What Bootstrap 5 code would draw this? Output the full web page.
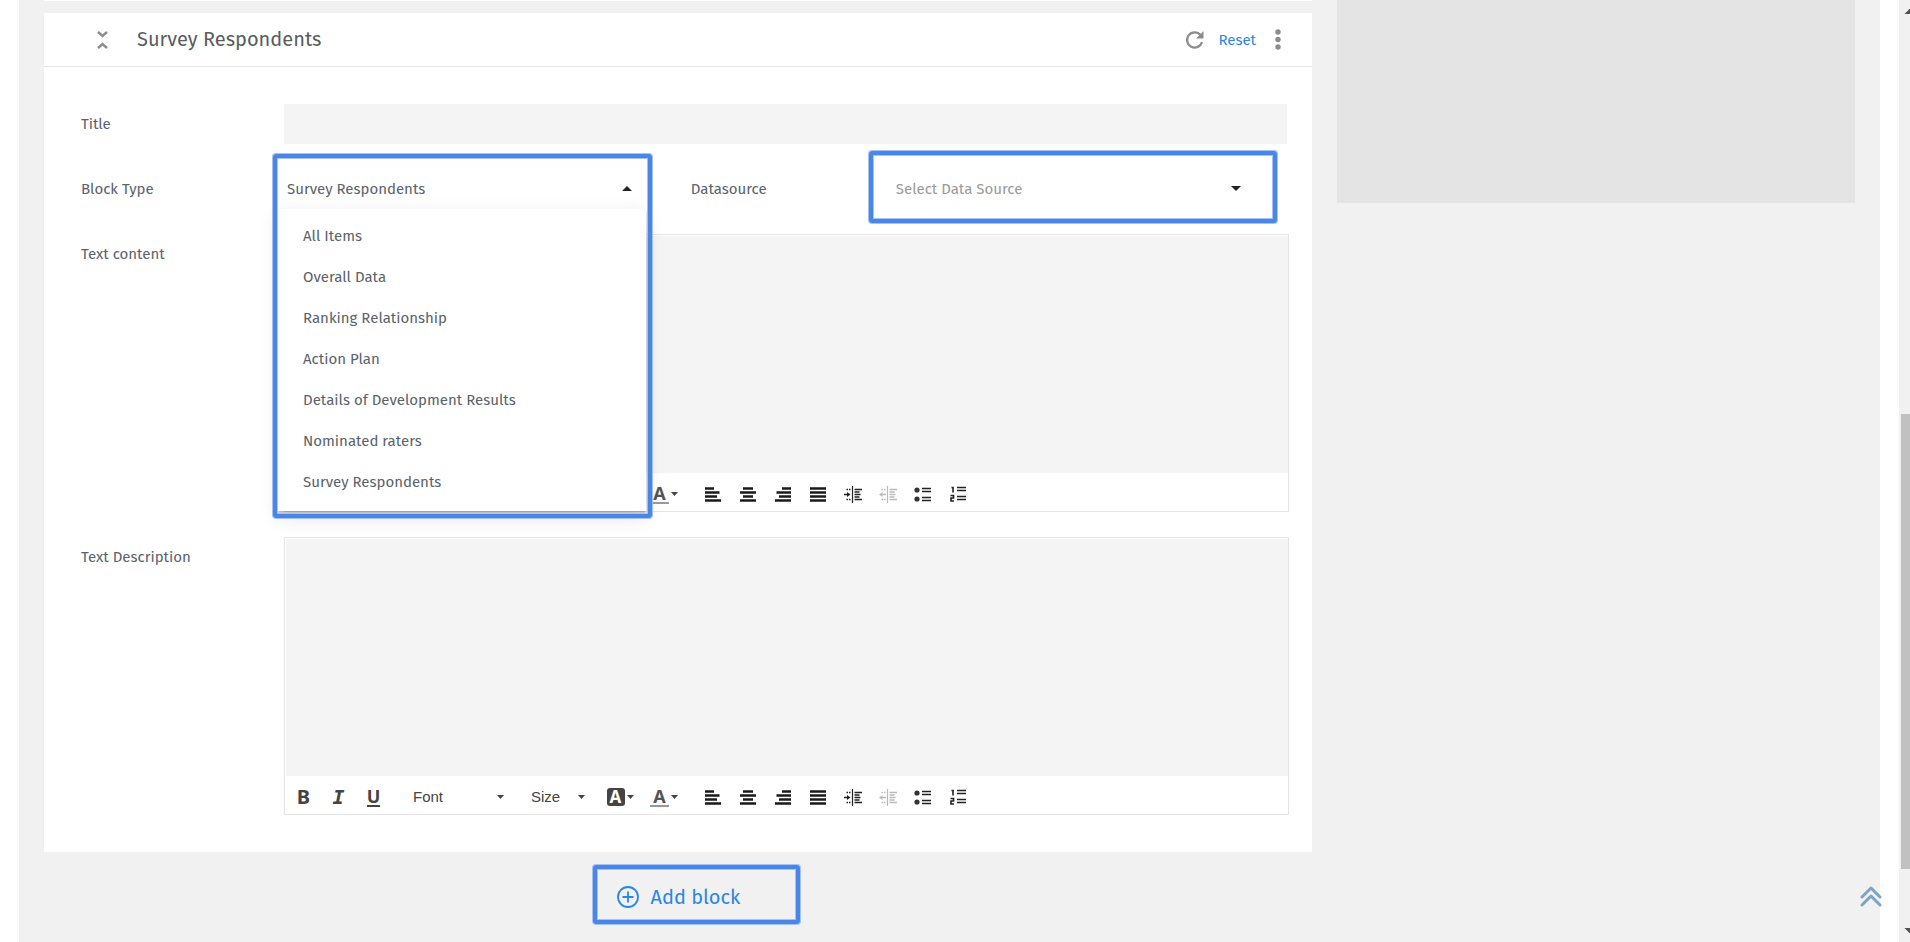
<!DOCTYPE html>
<html lang="en">
<head>
<meta charset="utf-8">
<meta name="viewport" content="width=device-width, initial-scale=1">
<title>Report blocks</title>
<link href="https://cdn.jsdelivr.net/npm/bootstrap@5.3.0/dist/css/bootstrap.min.css" rel="stylesheet">
<style>
  body { font-family: "Fira Sans", "Noto Sans", sans-serif; font-size: 15px; line-height: 20px; color: #5a626b; background: #fff; }
  .page-area { background: #f1f1f1; margin: 0 30px 0 19px; padding: 0 25px; gap: 25px; }
  .col-blocks { flex: 1268 1 0; min-width: 0; }
  .col-preview { flex: 518 1 0; height: 203px; background: #e4e4e4; }
  .block-prev { height: 1px; margin-bottom: 12px; background: #fff; }
  .block-head { height: 54px; border-bottom: 1px solid #e6e6e6; padding: 0 26px 0 43px; }
  .block-head h2 { font-size: 20px; line-height: 26px; font-weight: 400; color: #5a5c60; margin: 0 0 2px 8px; }
  .block-body { padding: 37px 23px 37px 37px; gap: 25px; }
  .field-label { flex: 0 0 203px; line-height: 40px; }
  .icon-btn { border: 0; background: none; padding: 0; display: inline-flex; align-items: center; justify-content: center; }
  .blue-link { color: #2a86e6; text-decoration: none; }
  .title-input { border: 0; border-radius: 0; background: #f4f4f4; height: 40px; margin-right: 2px; }
  .pick { appearance: none; border: 0; border-radius: 0; width: 100%; height: 40px; color: inherit; background: transparent no-repeat url("data:image/svg+xml,%3Csvg xmlns='http://www.w3.org/2000/svg' width='10' height='6'%3E%3Cpath d='M0 0h10L5 5z' fill='%23222'/%3E%3C/svg%3E"); }
  .pick-type { padding: 0 30px 0 3px; background-position: right 14px center; background-image: url("data:image/svg+xml,%3Csvg xmlns='http://www.w3.org/2000/svg' width='10' height='7'%3E%3Cpath d='M0 5h10L5 0z' fill='%23222'/%3E%3C/svg%3E"); }
  .pick-source { padding: 0 60px 0 18px; background-position: right 48px center; color: #999; }
  .type-field { flex: 0 0 36%; }
  .source-label { flex: 0 0 187px; margin-left: 45px; line-height: 40px; }
  .marked::after { content: ""; position: absolute; inset: 0; border: 4px solid #4a86e8; border-radius: 3px; box-shadow: 0 0 0 1px #a4c2f4, inset 0 0 0 1px #a4c2f4; pointer-events: none; z-index: 5; }
  .type-field.marked::after { inset: -15px -6px -309px -11px; }
  .source-field.marked::after { inset: -18px 12px -14px -9px; }
  .type-menu { position: absolute; top: 40px; left: -6px; right: 0; z-index: 4; margin: 0; padding: 6px 0 9px; list-style: none; background: #fff; box-shadow: 0 2px 2px rgba(0,0,0,.25), 0 6px 18px rgba(0,0,0,.12); }
  .type-menu button { display: block; width: 100%; height: 41px; padding: 0 25px; border: 0; background: none; text-align: left; color: inherit; }
  .editor { border: 1px solid #e4e4e4; padding-top: 1px; }
  .editor textarea { display: block; border: 0; resize: none; height: 237px; width: 100%; padding: 12px; background: #f4f4f4; border-left: 1px solid #fff; }
  .tools { height: 38px; padding: 4px 0 0 1px; }
  .tools .icon-btn { width: 35px; height: 34px; color: #444; }
  .tools .icon-btn.faded { color: #bbb; }
  .tools .pick { height: 34px; font: 15px/20px "Liberation Sans", Arial, sans-serif; color: #444; background-image: url("data:image/svg+xml,%3Csvg xmlns='http://www.w3.org/2000/svg' width='7' height='4'%3E%3Cpath d='M0 0h7L3.500 4z' fill='%23444'/%3E%3C/svg%3E"); background-position: right 9px center; }
  .pick-font { max-width: 110px; padding: 0 20px 0 10px; margin: 0 8px 0 12px; }
  .tools .pick-size { max-width: 69px; padding: 0 18px 0 10px; margin-right: 8px; background-position: right 5px center; }
  .tools .tint-btn { width: 44px; gap: 2px; }
  .tools .tint-last { margin-right: 9px; }
  .glyph { font-family: "Noto Sans", sans-serif; font-weight: 700; font-size: 20px; line-height: 20px; }
  .glyph-i { font-family: "DejaVu Sans Mono", monospace; font-style: italic; }
  .glyph-u { font-size: 18px; line-height: 17px; border-bottom: 2px solid #444; }
  .glyph-box { width: 18px; height: 18px; border-radius: 3px; background: #444; color: #fff; font-size: 17px; line-height: 18px; text-align: center; }
  .glyph-bar { width: 19px; font-size: 18px; line-height: 17px; color: #555; text-align: center; border-bottom: 2px solid #999; }
  .add-btn { align-self: center; margin: 12px 0 17px 36px; height: 61px; width: 209px; padding: 4px 0 0 25px; gap: 12px; font-size: 20px; justify-content: flex-start; }
  .add-btn.marked::after { inset: 1px; }
  .to-top { position: absolute; right: 19px; bottom: 35px; line-height: 0; }
  .scroll-rail { position: absolute; top: 0; right: 0; bottom: 0; width: 11px; background: #f1f1f1; }
  .scroll-thumb { position: absolute; top: 44%; bottom: 73px; left: 2px; right: 0; background: #c1c1c1; }
  .scroll-rail svg { position: absolute; left: 0; }
</style>
</head>
<body>
<svg class="d-none" aria-hidden="true">
  <symbol id="left" viewBox="0 0 16 15"><path d="M0 1.500h9M0 5.500h14.500M0 9.500h12M0 13.500h16" stroke="#1a1a1a" stroke-width="2.400"/></symbol>
  <symbol id="center" viewBox="0 0 16 15"><path d="M3 1.500h10M0 5.500h16M3 9.500h10M0 13.500h16" stroke="#1a1a1a" stroke-width="2.400"/></symbol>
  <symbol id="right" viewBox="0 0 16 15"><path d="M7 1.500h9M1.500 5.500H16M4 9.500h12M0 13.500h16" stroke="#1a1a1a" stroke-width="2.400"/></symbol>
  <symbol id="full" viewBox="0 0 16 15"><path d="M0 1.500h16M0 5.500h16M0 9.500h16M0 13.500h16" stroke="#1a1a1a" stroke-width="2.600"/></symbol>
  <symbol id="indent" viewBox="0 0 18 17"><path d="M8.500 0v17" stroke="#222" stroke-width="1.200"/><path d="M2.500 3.500h1.500M5 3.500h1.500M2.500 13.500h1.500M5 13.500h1.500M10.500 3.500H18M10.500 6h5M10.500 8.500h6M10.500 11h5M10.500 13.500H18M0 8.500h4" stroke="#222" stroke-width="1.500"/><path d="M3 6l3.500 2.500L3 11z" fill="#222"/></symbol>
  <symbol id="outdent" viewBox="0 0 18 17"><path d="M8.500 0v17" stroke="currentColor" stroke-width="1.200"/><path d="M2.500 3.500h1.500M5 3.500h1.500M2.500 13.500h1.500M5 13.500h1.500M10.500 3.500H18M10.500 6h5M10.500 8.500h6M10.500 11h5M10.500 13.500H18M3 8.500h4" stroke="currentColor" stroke-width="1.300"/><path d="M3.500 6L0 8.500 3.500 11z" fill="currentColor"/></symbol>
  <symbol id="bullets" viewBox="0 0 17 15"><circle cx="3" cy="3" r="2.600" fill="#333"/><circle cx="3" cy="12" r="2.600" fill="#333"/><path d="M8 1.500h9M8 4.500h9M8 10.500h9M8 13.500h9" stroke="#222" stroke-width="1.600"/></symbol>
  <symbol id="numbers" viewBox="0 0 16 16"><path d="M7 1.500h9M7 4.500h9M7 10.500h9M7 13.500h9" stroke="#222" stroke-width="1.600"/><path d="M1.500 1.500H3V6.500M.5 9.500h3v2.500H1v3h3" fill="none" stroke="#222" stroke-width="1.600"/></symbol>
  <symbol id="caret" viewBox="0 0 7 4"><path d="M0 0h7L3.500 4z" fill="#444"/></symbol>
</svg>

<div class="position-relative min-vh-100 d-flex">
  <main class="page-area d-flex flex-fill align-items-start">
    <div class="col-blocks d-flex flex-column">
      <div class="block-prev"></div>
      <section class="bg-white">
        <header class="block-head d-flex align-items-center">
          <button class="icon-btn p-2" type="button" aria-label="Collapse block">
            <svg width="26" height="20" viewBox="0 0 26 20" fill="none" stroke="#8c8c8c" stroke-width="2.400"><path d="M3 2l4.500 4L12 2M3 18l4.500-4L12 18"/></svg>
          </button>
          <h2>Survey Respondents</h2>
          <button class="icon-btn ms-auto me-3" type="button" aria-label="Refresh">
            <svg width="17" height="19" viewBox="1 0 17 19" overflow="visible"><path d="M16.500 5A7.600 7.600 0 1 0 18 12" fill="none" stroke="#8c8c8c" stroke-width="2.200"/><path d="M19.500 1v7.500H12z" fill="#8c8c8c"/></svg>
          </button>
          <a class="blue-link" href="#">Reset</a>
          <button class="icon-btn ms-3" type="button" aria-label="More">
            <svg width="14" height="22" viewBox="0 0 14 22" fill="#8c8c8c"><circle cx="6" cy="3" r="2.700"/><circle cx="6" cy="10.500" r="2.700"/><circle cx="6" cy="18" r="2.700"/></svg>
          </button>
        </header>
        <div class="block-body d-flex flex-column">
          <div class="d-flex">
            <label class="field-label" for="title">Title</label>
            <input class="title-input form-control" id="title" type="text">
          </div>
          <div class="d-flex">
            <label class="field-label" for="type">Block Type</label>
            <div class="d-flex flex-fill">
              <div class="type-field marked position-relative">
                <select class="pick pick-type" id="type"><option>Survey Respondents</option></select>
                <ul class="type-menu">
                  <li><button type="button">All Items</button></li>
                  <li><button type="button">Overall Data</button></li>
                  <li><button type="button">Ranking Relationship</button></li>
                  <li><button type="button">Action Plan</button></li>
                  <li><button type="button">Details of Development Results</button></li>
                  <li><button type="button">Nominated raters</button></li>
                  <li><button type="button">Survey Respondents</button></li>
                </ul>
              </div>
              <label class="source-label" for="source">Datasource</label>
              <div class="source-field marked position-relative flex-fill">
                <select class="pick pick-source" id="source"><option>Select Data Source</option></select>
              </div>
            </div>
          </div>
          <div class="d-flex">
            <label class="field-label" for="content">Text content</label>
            <div class="editor flex-fill">
              <textarea id="content"></textarea>
              <div class="tools d-flex align-items-center">
                <button class="icon-btn" type="button" aria-label="Bold"></button>
                <button class="icon-btn" type="button" aria-label="Italic"></button>
                <button class="icon-btn" type="button" aria-label="Underline"></button>
                <select class="pick pick-font" aria-label="Font"></select>
                <select class="pick pick-size" aria-label="Size"></select>
                <button class="icon-btn tint-btn" type="button" aria-label="Background color"></button>
                <button class="icon-btn tint-btn tint-last" type="button" aria-label="Text color"><span class="glyph glyph-bar">A</span><svg width="7" height="4"><use href="#caret"/></svg></button>
                <button class="icon-btn" type="button" aria-label="Align left"><svg width="16" height="15"><use href="#left"/></svg></button>
                <button class="icon-btn" type="button" aria-label="Align center"><svg width="16" height="15"><use href="#center"/></svg></button>
                <button class="icon-btn" type="button" aria-label="Align right"><svg width="16" height="15"><use href="#right"/></svg></button>
                <button class="icon-btn" type="button" aria-label="Justify"><svg width="16" height="15"><use href="#full"/></svg></button>
                <button class="icon-btn" type="button" aria-label="Indent"><svg width="18" height="17"><use href="#indent"/></svg></button>
                <button class="icon-btn faded" type="button" aria-label="Outdent"><svg width="18" height="17"><use href="#outdent"/></svg></button>
                <button class="icon-btn" type="button" aria-label="Bulleted list"><svg width="17" height="15"><use href="#bullets"/></svg></button>
                <button class="icon-btn" type="button" aria-label="Numbered list"><svg width="16" height="16"><use href="#numbers"/></svg></button>
              </div>
            </div>
          </div>
          <div class="d-flex">
            <label class="field-label" for="description">Text Description</label>
            <div class="editor flex-fill">
              <textarea id="description"></textarea>
              <div class="tools d-flex align-items-center">
                <button class="icon-btn" type="button" aria-label="Bold"><span class="glyph">B</span></button>
                <button class="icon-btn" type="button" aria-label="Italic"><span class="glyph glyph-i">I</span></button>
                <button class="icon-btn" type="button" aria-label="Underline"><span class="glyph glyph-u">U</span></button>
                <select class="pick pick-font" aria-label="Font"><option>Font</option></select>
                <select class="pick pick-size" aria-label="Size"><option>Size</option></select>
                <button class="icon-btn tint-btn" type="button" aria-label="Background color"><span class="glyph glyph-box">A</span><svg width="7" height="4"><use href="#caret"/></svg></button>
                <button class="icon-btn tint-btn tint-last" type="button" aria-label="Text color"><span class="glyph glyph-bar">A</span><svg width="7" height="4"><use href="#caret"/></svg></button>
                <button class="icon-btn" type="button" aria-label="Align left"><svg width="16" height="15"><use href="#left"/></svg></button>
                <button class="icon-btn" type="button" aria-label="Align center"><svg width="16" height="15"><use href="#center"/></svg></button>
                <button class="icon-btn" type="button" aria-label="Align right"><svg width="16" height="15"><use href="#right"/></svg></button>
                <button class="icon-btn" type="button" aria-label="Justify"><svg width="16" height="15"><use href="#full"/></svg></button>
                <button class="icon-btn" type="button" aria-label="Indent"><svg width="18" height="17"><use href="#indent"/></svg></button>
                <button class="icon-btn faded" type="button" aria-label="Outdent"><svg width="18" height="17"><use href="#outdent"/></svg></button>
                <button class="icon-btn" type="button" aria-label="Bulleted list"><svg width="17" height="15"><use href="#bullets"/></svg></button>
                <button class="icon-btn" type="button" aria-label="Numbered list"><svg width="16" height="16"><use href="#numbers"/></svg></button>
              </div>
            </div>
          </div>
        </div>
      </section>
      <button class="icon-btn add-btn blue-link marked position-relative" type="button">
        <svg width="22" height="22" viewBox="0 0 22 22" fill="none" stroke="#2a86e6" stroke-width="1.800"><circle cx="11" cy="11" r="10"/><path d="M11 5.500v11M5.500 11h11"/></svg>
        <span>Add block</span>
      </button>
    </div>
    <aside class="col-preview"></aside>
  </main>
  <a class="to-top me-2" href="#" aria-label="Back to top">
    <svg width="24" height="22" viewBox="0 0 24 22" fill="none" stroke="#7fa3c7" stroke-width="3" stroke-linecap="round" stroke-linejoin="round"><path d="M3 12l9-9 9 9M3 20l9-9 9 9"/></svg>
  </a>
  <div class="scroll-rail" aria-hidden="true">
    <svg class="top-0" width="11" height="17"><path d="M5.500 14L11 8.500V14z" fill="#505050"/></svg>
    <div class="scroll-thumb"></div>
    <svg class="bottom-0" width="11" height="17"><path d="M5.500 3H11v5.500z" fill="#505050"/></svg>
  </div>
</div>
<script src="https://cdn.jsdelivr.net/npm/bootstrap@5.3.0/dist/js/bootstrap.bundle.min.js"></script>
</body>
</html>
